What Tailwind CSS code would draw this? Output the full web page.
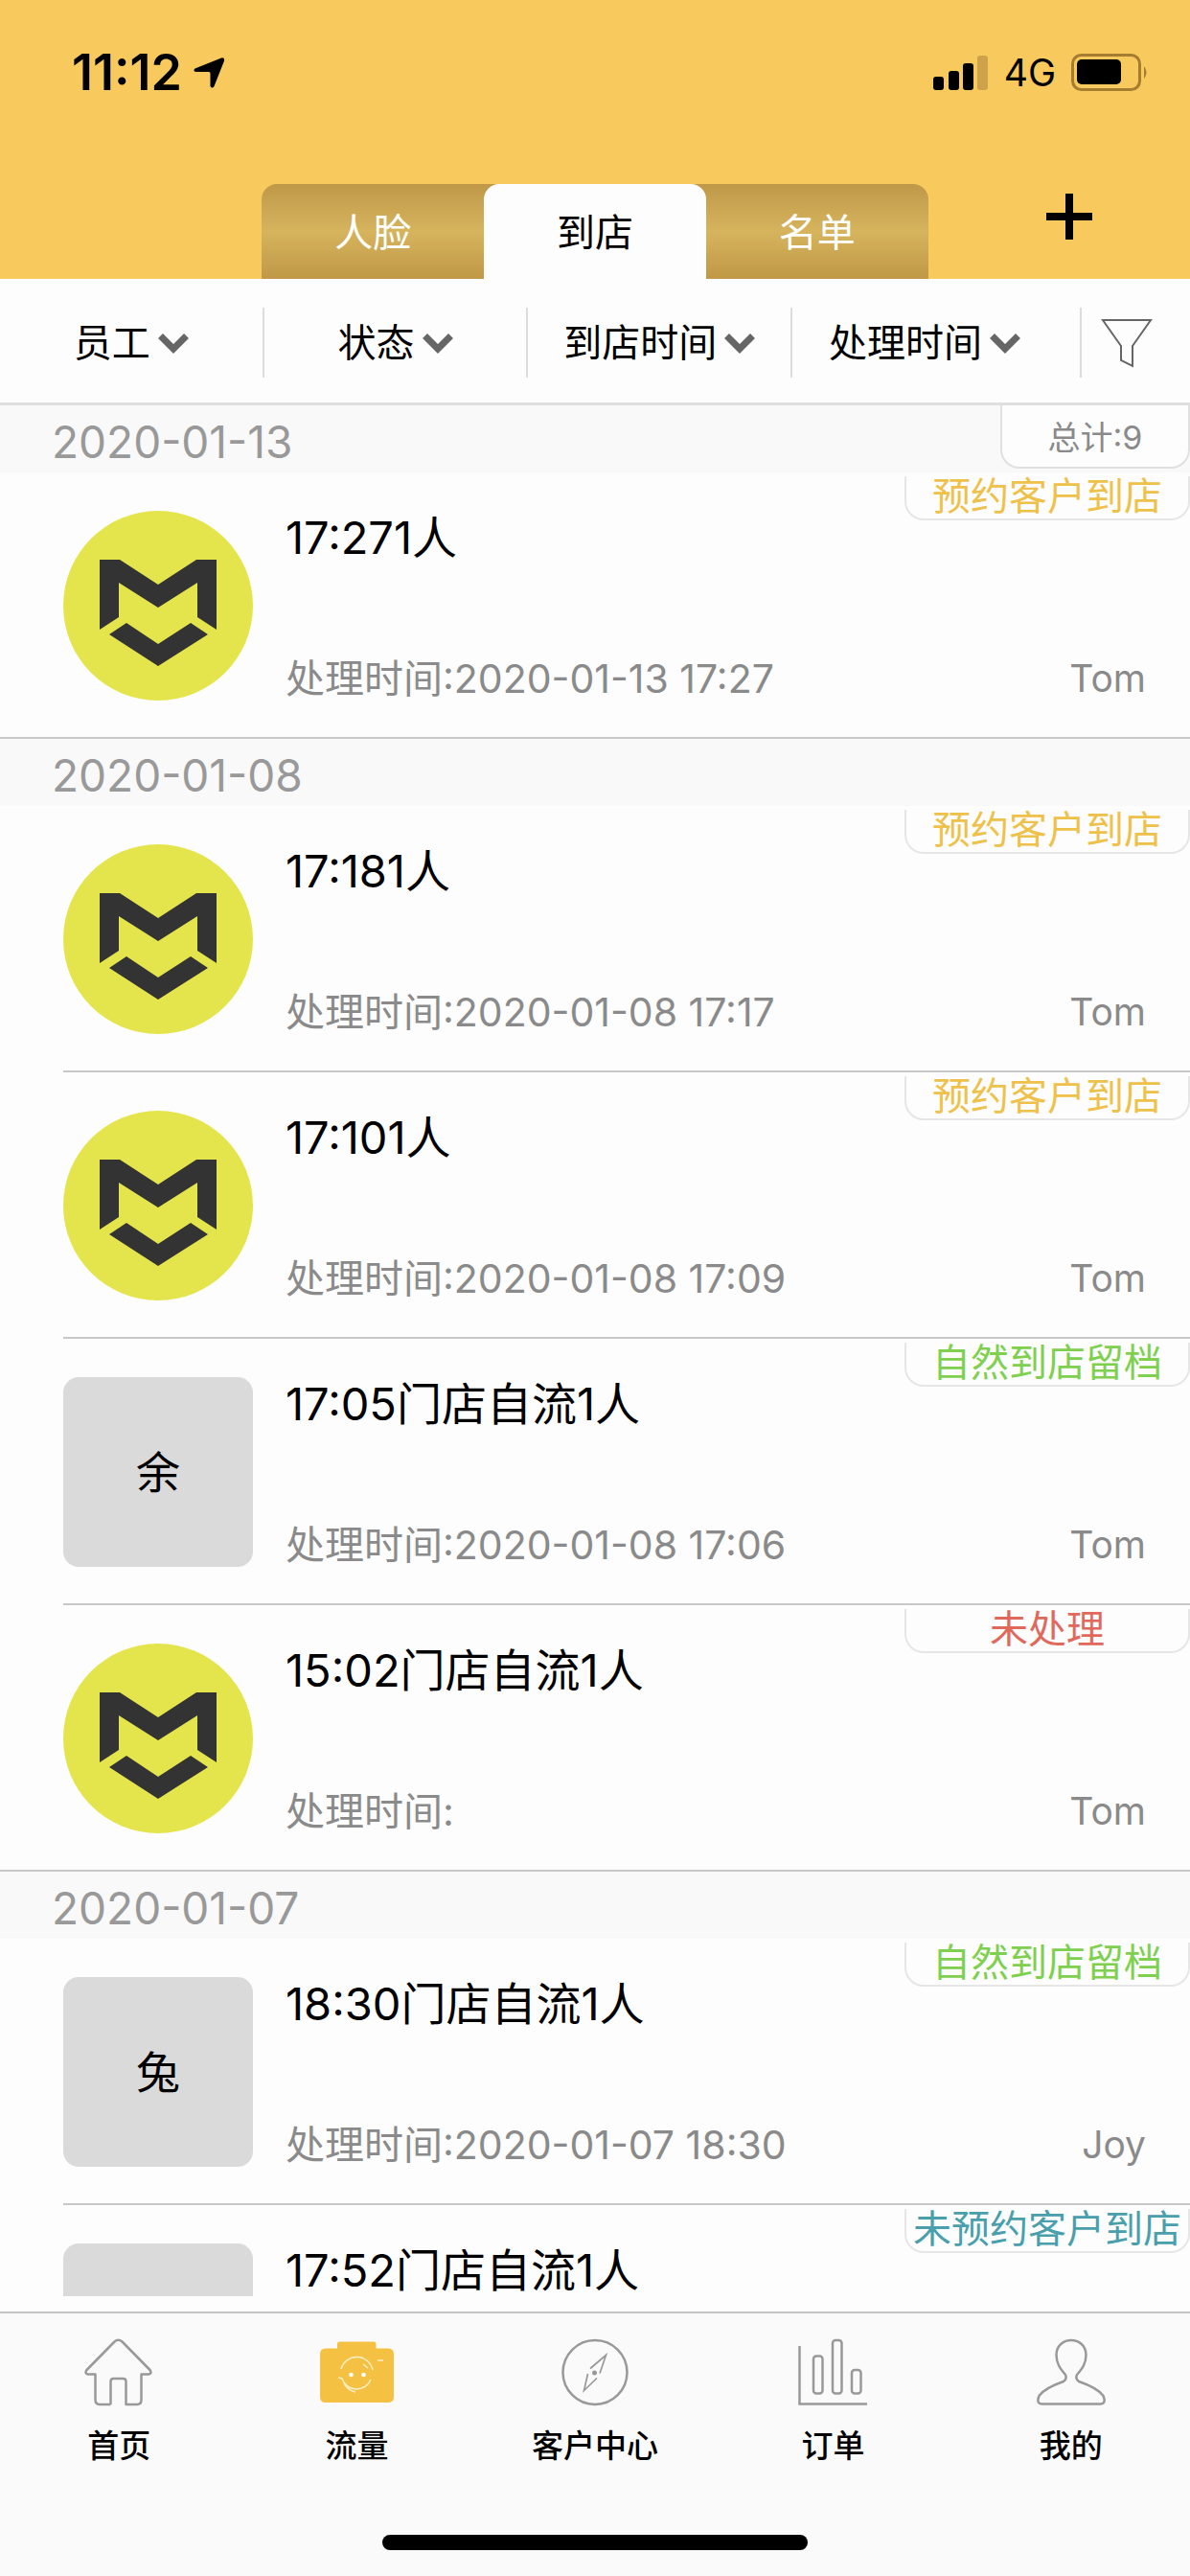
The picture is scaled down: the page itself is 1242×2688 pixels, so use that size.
<!DOCTYPE html>
<html lang="zh-CN">
<head>
  <meta charset="UTF-8">
  <meta name="viewport" content="width=device-width, initial-scale=1.0">
  <title>到店</title>
  <script src="https://cdn.jsdelivr.net/npm/@tailwindcss/browser@4"></script>
</head>
<body class="bg-[#fdfdfd] text-black font-['Inter','Noto_Sans_CJK_SC',sans-serif]">
  <div class="flex flex-col h-screen overflow-hidden">

    <!-- Header -->
    <header class="shrink-0 bg-[#f8c95c]">
      <div class="flex items-center justify-between h-[152px] pl-[75px] pr-[42px]">
        <div class="flex items-center gap-3">
          <span class="text-[52px] leading-[48px] font-semibold">11:12</span>
          <svg class="w-8 h-8" viewBox="0 0 32 32"><path d="M29 .5 Q32.500 -.5 32 3.500 L21.500 30 Q19.500 33 17.500 30 V16.500 Q17.500 15 16 15 H2 Q-1 13.500 1.500 11.500 Z"/></svg>
        </div>
        <div class="flex items-center gap-4">
          <svg class="w-[58px] h-9" viewBox="0 0 58 36">
            <rect x="0" y="22" width="11" height="14" rx="3"/>
            <rect x="16" y="16" width="11" height="20" rx="3"/>
            <rect x="31" y="8" width="11" height="28" rx="3"/>
            <rect x="46" y="0" width="11" height="36" rx="3" fill="#cda24a"/>
          </svg>
          <span class="text-[39px] leading-[48px]">4G</span>
          <svg class="w-[82px] h-10" viewBox="0 0 82 40">
            <rect x="1.500" y="1.500" width="70" height="36" rx="9" fill="none" stroke="#a67c30" stroke-width="3"/>
            <rect x="6" y="6" width="46" height="26" rx="5"/>
            <path d="M76 13 Q81 19.500 76 26 Z" fill="#a67c30"/>
          </svg>
        </div>
      </div>
      <div class="grid grid-cols-[22%_1fr_22%] pt-10">
        <nav class="col-start-2 grid grid-cols-3 h-[99px] rounded-t-2xl bg-linear-to-b from-[#bf9848] via-[#d6b45e] to-[#c09846] text-[40px] leading-[56px]">
          <button type="button" class="pt-0.5 text-white">人脸</button>
          <button type="button" class="pt-0.5 bg-[#fdfdfd] rounded-t-2xl">到店</button>
          <button type="button" class="pt-0.5 text-white">名单</button>
        </nav>
        <button type="button" aria-label="新增" class="flex justify-end items-start pt-[10px] pr-[102px]">
          <svg class="w-12 h-12" viewBox="0 0 48 48"><path d="M24 0 V48 M0 24 H48" stroke="#000" stroke-width="8"/></svg>
        </button>
      </div>
    </header>

    <!-- Filters -->
    <div class="shrink-0 flex items-center h-[132px] pt-1 border-b-[3px] border-[#dfdfdf] text-[40px] leading-[56px]">
      <button type="button" class="flex items-center justify-center gap-2 w-[22.2%] h-[73px] border-r-2 border-[#dcdcdc]">员工<svg class="w-8 h-[22px]" viewBox="0 0 32 22"><path d="M2.500 3.500 L16 17 L29.500 3.500" fill="none" stroke="#666" stroke-width="7"/></svg></button>
      <button type="button" class="flex items-center justify-center gap-2 w-[22.2%] h-[73px] border-r-2 border-[#dcdcdc]">状态<svg class="w-8 h-[22px]" viewBox="0 0 32 22"><path d="M2.500 3.500 L16 17 L29.500 3.500" fill="none" stroke="#666" stroke-width="7"/></svg></button>
      <button type="button" class="flex items-center justify-center gap-2 w-[22.2%] h-[73px] border-r-2 border-[#dcdcdc]">到店时间<svg class="w-8 h-[22px]" viewBox="0 0 32 22"><path d="M2.500 3.500 L16 17 L29.500 3.500" fill="none" stroke="#666" stroke-width="7"/></svg></button>
      <button type="button" class="flex items-center justify-center gap-2 w-[22.2%] h-[73px]">处理时间<svg class="w-8 h-[22px]" viewBox="0 0 32 22"><path d="M2.500 3.500 L16 17 L29.500 3.500" fill="none" stroke="#666" stroke-width="7"/></svg></button>
      <button type="button" aria-label="筛选" class="flex items-center flex-1 h-[73px] ml-6 pl-5 border-l-2 border-[#dcdcdc]">
        <svg class="w-[54px] h-[52px]" viewBox="0 0 54 52"><path d="M2 2 H52 L33 29 V50 L21 44 V29 Z" fill="none" stroke="#666" stroke-width="2"/></svg>
      </button>
    </div>

    <!-- Visit list -->
    <main id="visits" class="flex-1 min-h-0 overflow-hidden"></main>

    <!-- Bottom navigation -->
    <footer class="shrink-0 mt-4 border-t-2 border-[#c4c4c4] bg-[#fafafa]">
      <nav class="grid grid-cols-5 pt-[26px] text-[33px] leading-[48px] font-medium">
        <a href="#" class="flex flex-col items-center gap-4">
          <svg class="w-20 h-[72px]" viewBox="0 0 80 72" fill="none" stroke="#999" stroke-width="2.500" stroke-linejoin="round"><path d="M31.500 69 H20 Q15.500 69 15.500 64 V37.500 H8 Q4 37 6.500 33 L35.500 3.500 Q39.500 0 43.500 3.500 L72.500 33 Q75 37 71 37.500 H63.500 V64 Q63.500 69 59 69 H47.500 V45 Q47.500 42 44.500 42 H34.500 Q31.500 42 31.500 45 V69"/></svg>
          首页
        </a>
        <a href="#" class="flex flex-col items-center gap-4">
          <svg class="w-20 h-[72px]" viewBox="0 0 80 72">
            <path d="M19 10.500 V6 Q19 3.500 21.500 3.500 H57 Q59.500 3.500 59.500 6 V10.500 H72 Q78 10.500 78 16.500 V61 Q78 67 72 67 H7 Q1 67 1 61 V16.500 Q1 10.500 7 10.500 Z" fill="#f5c142"/>
            <g fill="none" stroke="#fdeec4" stroke-width="1.500">
              <path d="M23 32 A17 17 0 0 1 56 33 M20 41 L24 42 A16 16 0 0 0 54 43 M26 47 Q31 55 38 56 M46 27 L51 31 M61 23 H67"/>
            </g>
            <g fill="#fff"><circle cx="33.500" cy="38" r="2.300"/><circle cx="46.500" cy="38" r="2.300"/></g>
          </svg>
          流量
        </a>
        <a href="#" class="flex flex-col items-center gap-4">
          <svg class="w-20 h-[72px]" viewBox="0 0 80 72" fill="none" stroke="#999" stroke-width="2.500">
            <circle cx="40" cy="35.500" r="33.500"/>
            <path d="M35 31.500 L51.500 17.500 L45 36.500 M32.500 37 L28.500 54.500 L42 41.500" stroke-width="1.700"/>
            <circle cx="39.500" cy="36" r="2.500" fill="#999" stroke="none"/>
          </svg>
          客户中心
        </a>
        <a href="#" class="flex flex-col items-center gap-4">
          <svg class="w-20 h-[72px]" viewBox="0 0 80 72" fill="none" stroke="#999" stroke-width="2.500"><path d="M5.500 8 V68.500 H76"/><rect x="20" y="18.500" width="9.500" height="39" rx="3"/><rect x="40" y="2" width="9.500" height="55.500" rx="3"/><rect x="60" y="33" width="9.500" height="24.500" rx="3"/></svg>
          订单
        </a>
        <a href="#" class="flex flex-col items-center gap-4">
          <svg class="w-20 h-[72px]" viewBox="0 0 80 72" fill="none" stroke="#999" stroke-width="2.500" stroke-linejoin="round"><path d="M34 38 Q36 42 32 45 Q12 52 6.500 60 Q3 68.500 10 68.500 H70 Q77 68.500 73.500 60 Q68 52 48 45 Q44 42 46 38 C52 31 55.500 26 55.500 17 C55 -3 25 -3 24.500 17 C24.500 26 28 31 34 38 Z"/></svg>
          我的
        </a>
      </nav>
      <div class="h-4 w-[444px] mx-auto mt-[69px] mb-[27px] rounded-full bg-black"></div>
    </footer>
  </div>

  <script>
    const groups = [
      { date: '2020-01-13', total: 9, visits: [
        { title: '17:271人', handled: '2020-01-13 17:27', staff: 'Tom', status: 'booked' }
      ] },
      { date: '2020-01-08', visits: [
        { title: '17:181人', handled: '2020-01-08 17:17', staff: 'Tom', status: 'booked' },
        { title: '17:101人', handled: '2020-01-08 17:09', staff: 'Tom', status: 'booked' },
        { title: '17:05门店自流1人', handled: '2020-01-08 17:06', staff: 'Tom', status: 'walkin', name: '余' },
        { title: '15:02门店自流1人', handled: '', staff: 'Tom', status: 'pending' }
      ] },
      { date: '2020-01-07', visits: [
        { title: '18:30门店自流1人', handled: '2020-01-07 18:30', staff: 'Joy', status: 'walkin', name: '兔' },
        { title: '17:52门店自流1人', status: 'unbooked', name: ' ' }
      ] }
    ];

    const statuses = {
      booked: ['预约客户到店', 'text-[#eec14a]'],
      walkin: ['自然到店留档', 'text-[#7fd04f]'],
      pending: ['未处理', 'text-[#e0695c]'],
      unbooked: ['未预约客户到店', 'text-[#4a9fac]']
    };

    const logo = `<svg class="w-[198px] h-[198px] shrink-0" viewBox="0 0 198 198">
      <circle cx="99" cy="99" r="99" fill="#e4e54c"/>
      <path fill="#333" d="M38 51 H59 L99 77 L139 51 H160 V124 L140 111 V75 L99 101 L58 75 V111 L38 124 Z M66 117 L99 139 L133 117 L151 129 L99 162 L48 129 Z"/>
    </svg>`;

    function avatar(visit) {
      if (!visit.name) return logo;
      return `<div class="flex items-center justify-center shrink-0 w-[198px] h-[198px] rounded-2xl bg-[#dadada] text-[46px]">${visit.name}</div>`;
    }

    function details(visit) {
      if (!visit.staff) return '';
      return `<p class="flex justify-between text-[#8a8a8a] leading-[46px]"><span class="text-[41px]">处理时间:${visit.handled}</span><span class="text-[39px]">${visit.staff}</span></p>`;
    }

    function row(visit, last) {
      const [label, color] = statuses[visit.status];
      return `<li class="relative flex gap-[34px] h-[278px] pt-10 pr-[46px] border-b-2 border-[#c8c8c8] ${last ? 'pl-[66px]' : 'ml-[66px]'}">
        ${avatar(visit)}
        <div class="flex flex-col justify-between flex-1 h-[198px]">
          <h3 class="text-[47px] leading-[56px]">${visit.title}</h3>
          ${details(visit)}
        </div>
        <span class="absolute top-1 right-0 w-[298px] h-[46px] border-2 border-t-0 border-[#e6e6e6] rounded-b-[20px] text-center text-[40px] leading-[42px] whitespace-nowrap ${color}">${label}</span>
      </li>`;
    }

    document.getElementById('visits').innerHTML = groups.map((group) => `
      <section>
        <div class="flex justify-between h-[70px] pl-[54px] bg-[#f9f9fa]">
          <h2 class="text-[46px] leading-[76px] text-[#999]">${group.date}</h2>
          ${group.total ? `<span class="w-[198px] h-[66px] border-2 border-t-0 border-[#e0e0e0] rounded-b-[20px] bg-[#fdfdfd] text-center text-[34px] leading-[68px] text-[#8a8a8a]">总计:${group.total}</span>` : ''}
        </div>
        <ul>${group.visits.map((visit, i) => row(visit, i === group.visits.length - 1)).join('')}</ul>
      </section>`).join('');
  </script>
</body>
</html>
